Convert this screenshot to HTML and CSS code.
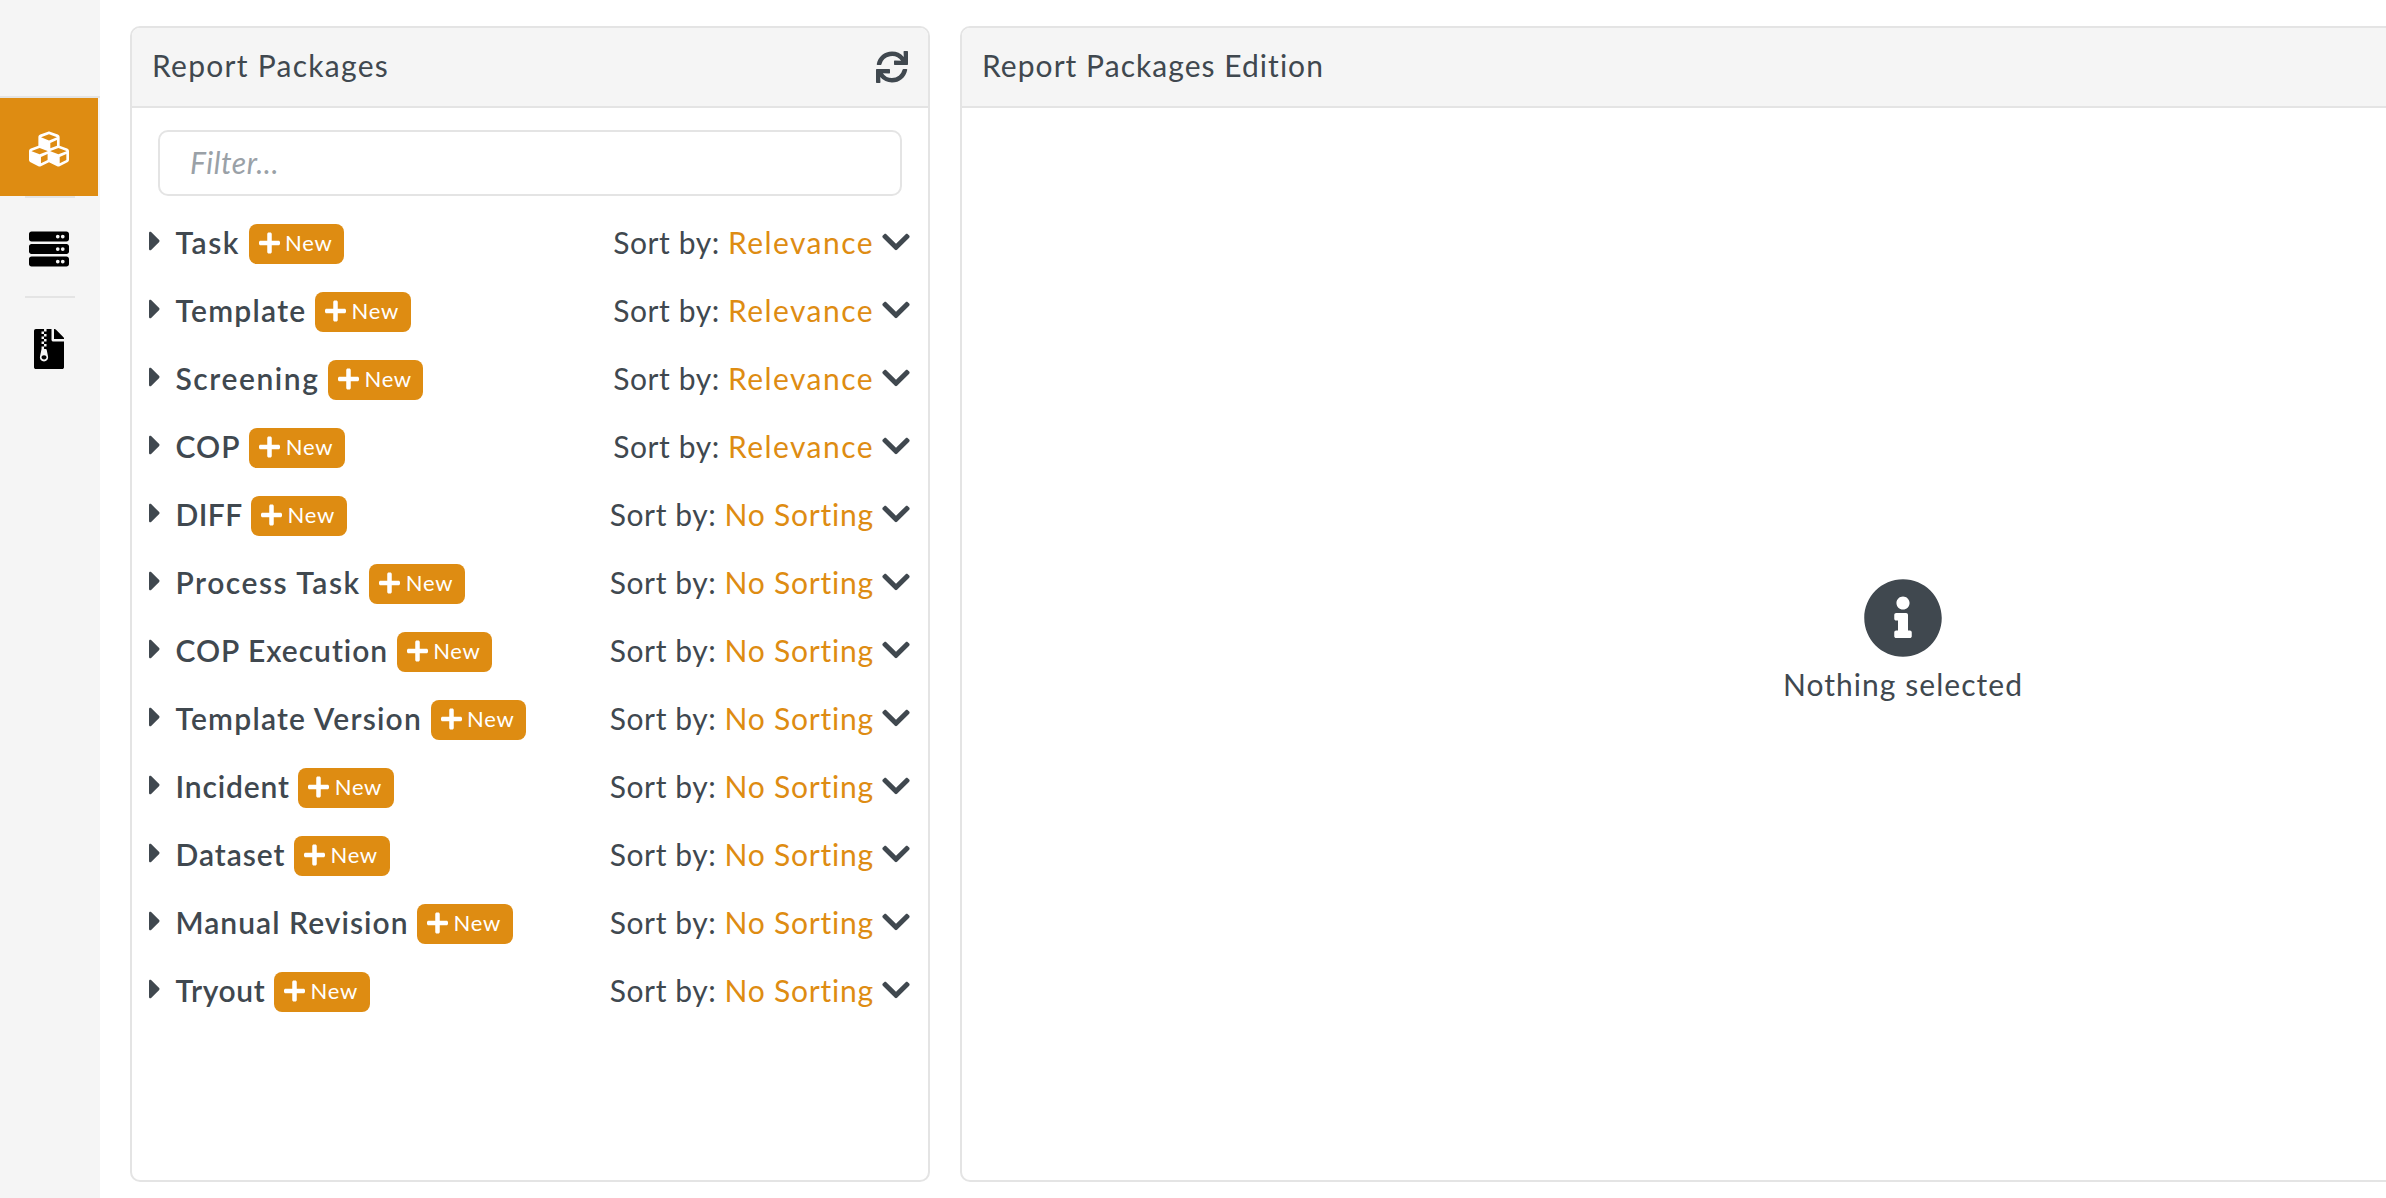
FILE: index.html
```html
<!DOCTYPE html>
<html lang="en">
<head>
<meta charset="utf-8">
<title>Report Packages</title>
<link rel="stylesheet" href="styles.css">
</head>
<body>
<svg class="sprite" aria-hidden="true">
  <symbol id="cubes" viewBox="0 0 512 512"><path d="M488.6 250.2L392 214V105.500c0-15-9.300-28.400-23.400-33.700l-100-37.500c-8.100-3.100-17.100-3.100-25.300 0l-100 37.500c-14.100 5.300-23.400 18.700-23.400 33.700V214l-96.600 36.200C9.300 255.500 0 268.900 0 283.900V394c0 13.600 7.700 26.100 19.900 32.200l100 50c10.100 5.100 22.100 5.100 32.200 0l103.900-52 103.900 52c10.100 5.100 22.100 5.100 32.200 0l100-50c12.200-6.100 19.900-18.600 19.900-32.200V283.900c0-15-9.300-28.400-23.400-33.700zM358 214.800l-85 31.900v-68.200l85-37v73.300zM154 104.100l102-38.200 102 38.200v.6l-102 41.400-102-41.400v-.6zm84 291.100l-85 42.500v-79.100l85-38.800v75.400zm0-112l-102 41.400-102-41.400v-.6l102-38.200 102 38.200v.6zm240 112l-85 42.500v-79.100l85-38.800v75.400zm0-112l-102 41.400-102-41.400v-.6l102-38.200 102 38.200v.6z"/></symbol>
  <symbol id="server" viewBox="0 0 512 512"><path fill-rule="evenodd" d="M480 160H32c-17.700 0-32-14.300-32-32V64c0-17.700 14.300-32 32-32h448c17.700 0 32 14.300 32 32v64c0 17.700-14.300 32-32 32zm-48-88a24 24 0 1 0 0 48 24 24 0 0 0 0-48zm-64 0a24 24 0 1 0 0 48 24 24 0 0 0 0-48zm112 248H32c-17.700 0-32-14.300-32-32v-64c0-17.700 14.300-32 32-32h448c17.700 0 32 14.300 32 32v64c0 17.700-14.300 32-32 32zm-48-88a24 24 0 1 0 0 48 24 24 0 0 0 0-48zm-64 0a24 24 0 1 0 0 48 24 24 0 0 0 0-48zm112 248H32c-17.700 0-32-14.300-32-32v-64c0-17.700 14.300-32 32-32h448c17.700 0 32 14.300 32 32v64c0 17.700-14.300 32-32 32zm-48-88a24 24 0 1 0 0 48 24 24 0 0 0 0-48zm-64 0a24 24 0 1 0 0 48 24 24 0 0 0 0-48z"/></symbol>
  <symbol id="archive" viewBox="0 0 384 512"><path d="M377 105L279.100 7c-4.500-4.500-10.600-7-17-7H256v128h128v-6.100c0-6.300-2.500-12.400-7-16.900zM128.400 336c-17.900 0-32.400 12.100-32.400 27 0 15 14.600 27 32.500 27s32.400-12.100 32.400-27-14.600-27-32.500-27zM224 136V0h-63.600v32h-32V0H24C10.700 0 0 10.700 0 24v464c0 13.300 10.700 24 24 24h336c13.300 0 24-10.700 24-24V160H248c-13.200 0-24-10.800-24-24zM95.900 32h32v32h-32zm32.300 384c-33.200 0-58-30.400-51.400-62.900L96.400 256v-32h32v-32h-32v-32h32v-32h-32V96h32V64h32v32h-32v32h32v32h-32v32h32v32h-32v32h22.100c5.700 0 10.700 4.100 11.800 9.700l17.300 87.700c6.400 32.400-18.400 62.600-51.400 62.600z"/></symbol>
  <symbol id="sync" viewBox="0 0 512 512"><path d="M440.650 12.570l4 82.770A247.160 247.160 0 0 0 255.830 8C134.730 8 33.910 94.920 12.290 209.820A12 12 0 0 0 24.090 224h49.050a12 12 0 0 0 11.670-9.260 175.910 175.910 0 0 1 317-56.940l-101.460-4.860a12 12 0 0 0-12.570 12v47.410a12 12 0 0 0 12 12H500a12 12 0 0 0 12-12V12a12 12 0 0 0-12-12h-47.370a12 12 0 0 0-11.980 12.570zM255.830 432a175.610 175.610 0 0 1-146-77.800l101.800 4.870a12 12 0 0 0 12.570-12v-47.400a12 12 0 0 0-12-12H12a12 12 0 0 0-12 12V500a12 12 0 0 0 12 12h47.350a12 12 0 0 0 12-12.600l-4.150-82.570A247.170 247.170 0 0 0 255.830 504c121.110 0 221.930-86.920 243.550-201.820a12 12 0 0 0-11.800-14.180h-49.050a12 12 0 0 0-11.670 9.260A175.860 175.860 0 0 1 255.830 432z"/></symbol>
  <symbol id="info" viewBox="0 0 512 512"><path d="M256 8C119.043 8 8 119.083 8 256c0 136.997 111.043 248 248 248s248-111.003 248-248C504 119.083 392.957 8 256 8zm0 110c23.196 0 42 18.804 42 42s-18.804 42-42 42-42-18.804-42-42 18.804-42 42-42zm56 254c0 6.627-5.373 12-12 12h-88c-6.627 0-12-5.373-12-12v-24c0-6.627 5.373-12 12-12h12v-64h-12c-6.627 0-12-5.373-12-12v-24c0-6.627 5.373-12 12-12h64c6.627 0 12 5.373 12 12v100h12c6.627 0 12 5.373 12 12v24z"/></symbol>
  <symbol id="chevron" viewBox="0 0 448 512"><path d="M207.029 381.476L12.686 187.132c-9.373-9.373-9.373-24.569 0-33.941l22.667-22.667c9.357-9.357 24.522-9.375 33.901-.04L224 284.505l154.745-154.021c9.379-9.335 24.544-9.317 33.901.04l22.667 22.667c9.373 9.373 9.373 24.569 0 33.941L240.971 381.476c-9.373 9.372-24.569 9.372-33.942 0z"/></symbol>
  <symbol id="plus" viewBox="0 0 448 512"><path d="M416 208H272V64c0-17.670-14.330-32-32-32h-32c-17.670 0-32 14.330-32 32v144H32c-17.670 0-32 14.330-32 32v32c0 17.670 14.330 32 32 32h144v144c0 17.670 14.330 32 32 32h32c17.670 0 32-14.330 32-32V304h144c17.670 0 32-14.330 32-32v-32c0-17.670-14.330-32-32-32z"/></symbol>
  <symbol id="caret" viewBox="0 0 192 512"><path d="M0 384.662V127.338c0-17.818 21.543-26.741 34.142-14.142l128.662 128.662c7.810 7.810 7.810 20.474 0 28.284L34.142 398.804C21.543 411.404 0 402.480 0 384.662z"/></symbol>
</svg>

<div class="app">
  <nav class="sidebar">
    <a class="nav-item active"><svg><use href="#cubes"/></svg></a>
    <a class="nav-item"><svg><use href="#server"/></svg></a>
    <a class="nav-item"><svg><use href="#archive"/></svg></a>
  </nav>

  <section class="panel packages">
    <header class="panel-head"><h2 class="title">Report Packages</h2><svg class="refresh"><use href="#sync"/></svg></header>
    <input class="filter" type="text" placeholder="Filter...">
    <ul class="list" id="list"></ul>
  </section>

  <section class="panel edition">
    <header class="panel-head"><h2 class="title title-edition">Report Packages Edition</h2></header>
    <div class="empty">
      <svg class="info"><use href="#info"/></svg>
      <p class="empty-text">Nothing selected</p>
    </div>
  </section>
</div>
<script src="list.js"></script>
</body>
</html>
```
FILE: styles.css
```css
* { box-sizing: border-box; }

body {
  margin: 0;
  background: #fff;
  color: #40484f;
  font: 400 30px/1.2 Lato, "Open Sans", sans-serif;
  overflow: hidden;
}

svg { display: block; fill: currentColor; flex: none; }
.sprite { width: 0; height: 0; position: absolute; }

.app { display: flex; height: 1198px; overflow: hidden; }

.sidebar {
  flex: none;
  width: 100px;
  padding-top: 96px;
  background: #f5f5f5;
  color: #000;
}
.nav-item {
  display: flex;
  flex-direction: column;
  align-items: center;
  height: 100px;
  padding-right: 2px;
}
.nav-item::before {
  content: "";
  flex: none;
  width: 50px;
  height: 2px;
  margin: 0 -1px 0 1px;
  background: #e4e4e4;
}
.nav-item svg { width: 40px; height: 40px; margin-top: 31px; }
.nav-item.active {
  color: #fff;
  background: linear-gradient(#de8c12, #de8c12) 0 2px / 98px 98px no-repeat;
}
.nav-item.active::before { width: 100px; }

.panel {
  flex: none;
  display: flex;
  flex-direction: column;
  height: 1156px;
  margin-top: 26px;
  border: 2px solid #e4e4e4;
  border-radius: 10px;
  overflow: hidden;
}
.packages { width: 800px; margin-left: 30px; }
.edition { width: 1886px; margin-left: 30px; }

.panel-head {
  display: flex;
  justify-content: space-between;
  align-items: center;
  height: 80px;
  padding: 0 20px;
  background: #f5f5f5;
  border-bottom: 2px solid #e4e4e4;
}
.title {
  margin: 0;
  padding-bottom: 4px;
  font-size: 30px;
  font-weight: 400;
  letter-spacing: 1.27px;
}
.title-edition { letter-spacing: 1.04px; }
.refresh { width: 32px; height: 32px; }

.filter {
  height: 66px;
  margin: 22px 26px 14px;
  padding: 0 30px 3px;
  border: 2px solid #e4e4e4;
  border-radius: 10px;
  font: italic 30px Lato, "Open Sans", sans-serif;
  letter-spacing: .55px;
}
.filter::placeholder { color: #9aa1a7; opacity: 1; }

.list { list-style: none; margin: 0; padding: 0 18px 0 16.5px; }
.row { display: flex; align-items: center; height: 68px; }
.caret { width: 12px; height: 32px; margin: 0 15px 6px 0; }
.name {
  flex: none;
  padding-bottom: 4px;
  font-weight: 600;
  white-space: nowrap;
}
.new {
  display: flex;
  align-items: center;
  width: 95.5px;
  height: 40px;
  margin-left: 8.5px;
  padding: 0 0 3px 10px;
  border: 0;
  border-radius: 8px;
  background: #de8c12;
  color: #fff;
  font: 22px/26px Lato, "Open Sans", sans-serif;
  letter-spacing: .7px;
}
.new svg { width: 21px; height: 24px; margin-right: 5.5px; }
.sort {
  display: flex;
  align-items: center;
  margin-left: auto;
  padding-bottom: 4px;
  white-space: pre;
}
.sort-label { letter-spacing: .6px; }
.sort-value { margin-left: 8px; color: #de8c12; letter-spacing: 1.46px; }
.sort-value.none { letter-spacing: .8px; }
.sort svg { width: 28px; height: 32px; margin-left: 8px; }

.empty {
  display: flex;
  flex: 1;
  flex-direction: column;
  align-items: center;
  padding-top: 470px;
}
.info { width: 80px; height: 80px; }
.empty-text { margin: 8px 0 0; letter-spacing: 1.05px; }
```
FILE: list.js
```js
// [name, letter spacing in px, sort order]
const packages = [
  ["Task", 1.55, "Relevance"],
  ["Template", 1.26, "Relevance"],
  ["Screening", 1.56, "Relevance"],
  ["COP", 1.1, "Relevance"],
  ["DIFF", 0.4, "No Sorting"],
  ["Process Task", 1.53, "No Sorting"],
  ["COP Execution", 0.97, "No Sorting"],
  ["Template Version", 1.22, "No Sorting"],
  ["Incident", 0.84, "No Sorting"],
  ["Dataset", 0.97, "No Sorting"],
  ["Manual Revision", 1.04, "No Sorting"],
  ["Tryout", 0.68, "No Sorting"],
];

document.getElementById("list").innerHTML = packages.map(([name, track, sort]) => `
  <li class="row">
    <svg class="caret"><use href="#caret"/></svg>
    <span class="name" style="letter-spacing:${track}px">${name}</span>
    <button class="new"><svg><use href="#plus"/></svg>New</button>
    <div class="sort"><span class="sort-label">Sort by:</span><span class="sort-value${sort === "Relevance" ? "" : " none"}">${sort}</span><svg><use href="#chevron"/></svg></div>
  </li>`).join("");
```
